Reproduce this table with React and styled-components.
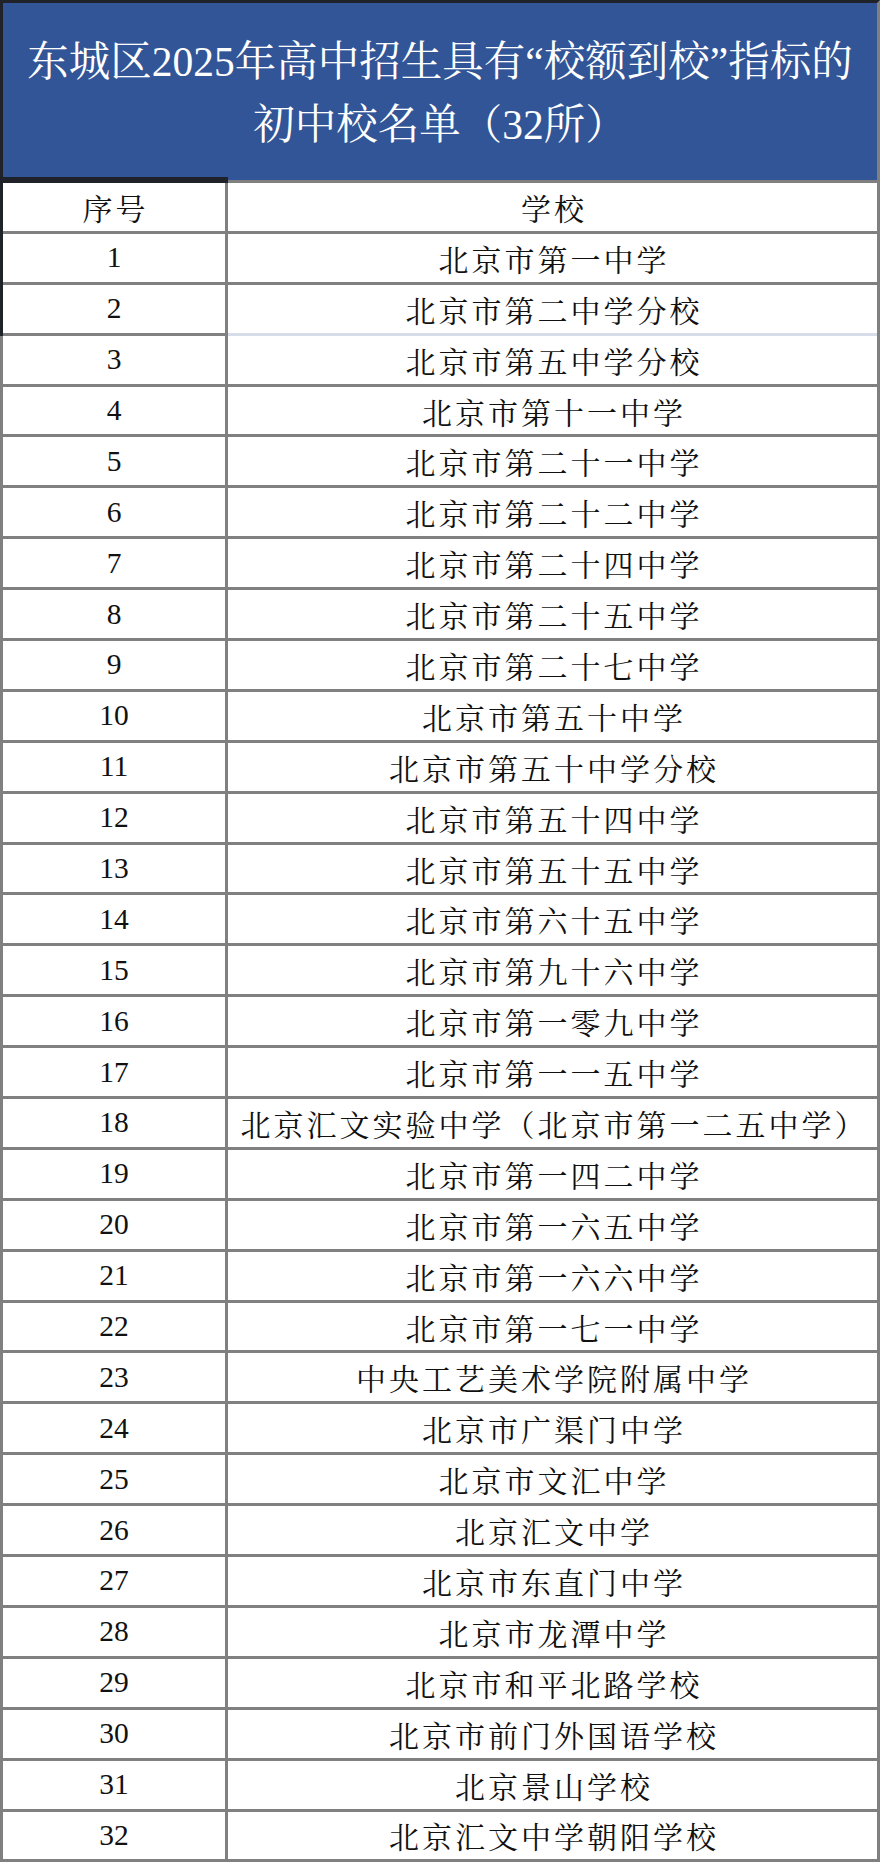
import React from 'react';
import styled, { createGlobalStyle } from 'styled-components';

// PAGE RESET
const GlobalStyle = createGlobalStyle`
  html, body {
    margin: 0;
    padding: 0;
    background: #ffffff;
  }
  body {
    width: 880px;
    font-family: "Liberation Serif", "Noto Serif CJK SC", "Noto Sans CJK SC", serif;
  }
`;

const GRID = '#808080';
const DARK = '#1f2228';

const Sheet = styled.div`
  width: 880px;
  box-sizing: border-box;
`;

// BLUE TITLE BLOCK
const Title = styled.h1`
  margin: 0;
  box-sizing: border-box;
  background: #315597;
  color: #ffffff;
  border-top: 3px solid ${DARK};
  border-left: 3px solid ${DARK};
  border-right: 3px solid ${GRID};
  padding: 28px 10px 23px;
  font-family: "Liberation Serif", "Noto Serif CJK SC", "Noto Sans CJK SC", serif;
  font-weight: normal;
  font-size: 41.5px;
  line-height: 63px;
  text-align: center;
  white-space: nowrap;
`;

// TABLE ROWS
const Row = styled.div`
  position: relative;
  display: grid;
  grid-template-columns: 225px 1fr;
  border-left: 3px solid ${(p) => (p.$dark ? DARK : GRID)};
  border-right: 3px solid ${GRID};
  border-top: ${(p) => (p.$head ? `3px solid ${GRID}` : 'none')};

  /* dark selection edge over the first header cell */
  ${(p) =>
    p.$head &&
    `
    &::before {
      content: '';
      position: absolute;
      left: -3px;
      top: -6px;
      width: 228px;
      height: 6px;
      background: ${DARK};
    }
  `}
`;

const Cell = styled.div`
  box-sizing: content-box;
  height: 47.9px;
  display: flex;
  align-items: center;
  justify-content: center;
  border-bottom: 3px solid ${(p) => (p.$light ? '#d6dde9' : GRID)};
  color: #111111;
  white-space: nowrap;
`;

const NumCell = styled(Cell)`
  border-right: 3px solid ${GRID};
  font-family: "Liberation Serif", serif;
  font-size: 29.5px;
`;

const NameCell = styled(Cell)`
  font-family: "Noto Serif CJK SC", "Noto Sans CJK SC", serif;
  font-size: 30px;
  letter-spacing: 3px;
  padding-left: 3px;
`;

const HeadCell = styled(NameCell)`
  ${(p) => p.$first && `border-right: 3px solid ${GRID};`}
`;

const schools = [
  '北京市第一中学',
  '北京市第二中学分校',
  '北京市第五中学分校',
  '北京市第十一中学',
  '北京市第二十一中学',
  '北京市第二十二中学',
  '北京市第二十四中学',
  '北京市第二十五中学',
  '北京市第二十七中学',
  '北京市第五十中学',
  '北京市第五十中学分校',
  '北京市第五十四中学',
  '北京市第五十五中学',
  '北京市第六十五中学',
  '北京市第九十六中学',
  '北京市第一零九中学',
  '北京市第一一五中学',
  '北京汇文实验中学（北京市第一二五中学）',
  '北京市第一四二中学',
  '北京市第一六五中学',
  '北京市第一六六中学',
  '北京市第一七一中学',
  '中央工艺美术学院附属中学',
  '北京市广渠门中学',
  '北京市文汇中学',
  '北京汇文中学',
  '北京市东直门中学',
  '北京市龙潭中学',
  '北京市和平北路学校',
  '北京市前门外国语学校',
  '北京景山学校',
  '北京汇文中学朝阳学校',
];

const App = () => {
  return (
    <>
      <GlobalStyle />
      <Sheet>
        <Title>
          东城区2025年高中招生具有“校额到校”指标的
          <br />
          初中校名单（32所）
        </Title>
        <Row $head $dark>
          <HeadCell $first>序号</HeadCell>
          <HeadCell>学校</HeadCell>
        </Row>
        {schools.map((name, i) => (
          <Row key={name} $dark={i < 2}>
            <NumCell>{i + 1}</NumCell>
            <NameCell $light={i === 1}>{name}</NameCell>
          </Row>
        ))}
      </Sheet>
    </>
  );
};

export default App;
